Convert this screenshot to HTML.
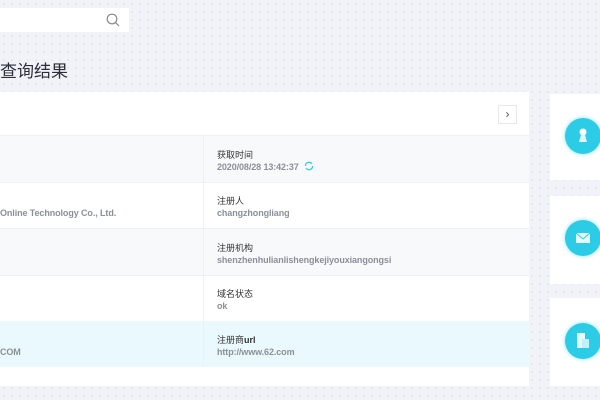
<!DOCTYPE html>
<html><head><meta charset="utf-8"><style>
*{margin:0;padding:0;box-sizing:border-box}
body{width:600px;height:400px;overflow:hidden;background:#f1f3f8;background-image:radial-gradient(#e2e5ee 0.8px,transparent 1px);background-size:8px 8px;font-family:"Liberation Sans","Noto Sans CJK SC",sans-serif;position:relative}
.abs{position:absolute}
.search{left:0;top:8px;width:129px;height:24px;background:#fff}
.title{left:0;top:57px;font-size:17px;color:#2b2f3a}
.card{left:0;top:92px;width:529px;height:294px;background:#fff}
.btn{left:498px;top:105px;width:19px;height:19px;border:1px solid #e6e8ee;background:#fff;font-size:12px;color:#555;text-align:center;line-height:16px}
.row{left:0;width:529px;border-top:1px solid #edf0f4}
.div{left:203px;width:1px;background:#edf0f4}
.lab{left:217px;font-size:9px;color:#333}
.val{font-size:9px;color:#8a8f99;font-weight:bold;letter-spacing:-0.1px}
.side{left:550px;width:50px;background:#fff}
.ic{left:565px;width:36px;height:36px;border-radius:50%;background:#2ccbe6;box-shadow:0 0 4px #7fe3f2}
</style></head><body>
<div class="abs search"><svg class="abs" style="left:106px;top:5px" width="14" height="14" viewBox="0 0 14 14"><circle cx="6" cy="6" r="4.8" fill="none" stroke="#888" stroke-width="1.2"/><path d="M9.5 9.5L13 13" stroke="#888" stroke-width="1.2"/></svg></div>
<div class="abs title">查询结果</div>
<div class="abs card"></div>
<div class="abs btn">›</div>
<div class="abs row" style="top:135px;height:47px;background:#f8f9fb"></div>
<div class="abs row" style="top:182px;height:46px;background:#fff"></div>
<div class="abs row" style="top:228px;height:47px;background:#f8f9fb"></div>
<div class="abs row" style="top:275px;height:46px;background:#fff"></div>
<div class="abs row" style="top:321px;height:46px;background:#e9f9fd;border-top:0"></div>
<div class="abs div" style="top:135px;height:232px"></div>
<div class="abs lab" style="top:148px">获取时间</div>
<div class="abs val" style="left:217px;top:162px">2020/08/28 13:42:37</div>
<svg class="abs" style="left:304px;top:161px" width="10" height="10" viewBox="0 0 10 10"><path d="M1.5 5A3.5 3.5 0 0 1 8 3M8.5 5A3.5 3.5 0 0 1 2 7" fill="none" stroke="#2ccbe6" stroke-width="1.2"/></svg>
<div class="abs lab" style="top:194px">注册人</div>
<div class="abs val" style="left:217px;top:208px">changzhongliang</div>
<div class="abs val" style="left:0;top:208px">Online Technology Co., Ltd.</div>
<div class="abs lab" style="top:241px">注册机构</div>
<div class="abs val" style="left:217px;top:255px">shenzhenhulianlishengkejiyouxiangongsi</div>
<div class="abs lab" style="top:287px">域名状态</div>
<div class="abs val" style="left:217px;top:301px">ok</div>
<div class="abs lab" style="top:333px">注册商<b>url</b></div>
<div class="abs val" style="left:217px;top:347px">http://www.62.com</div>
<div class="abs val" style="left:0;top:347px">COM</div>
<div class="abs side" style="top:94px;height:86px"></div>
<div class="abs side" style="top:196px;height:88px"></div>
<div class="abs side" style="top:298px;height:88px"></div>
<div class="abs ic" style="top:118px"></div>
<div class="abs ic" style="top:220px"></div>
<div class="abs ic" style="top:323px"></div>
<svg class="abs" style="left:576px;top:127px" width="14" height="18" viewBox="0 0 14 18"><circle cx="7" cy="5" r="3.5" fill="#fff"/><path d="M5 8L3 15H11L9 8Z" fill="#e0f8fc"/></svg>
<svg class="abs" style="left:575px;top:232px" width="16" height="12" viewBox="0 0 16 12"><rect x="1" y="1" width="14" height="10" fill="#e6fafd"/><path d="M1 1L8 7L15 1" fill="none" stroke="#2ccbe6" stroke-width="1"/></svg>
<svg class="abs" style="left:575px;top:332px" width="16" height="18" viewBox="0 0 16 18"><rect x="2" y="1" width="8" height="15" fill="#e6fafd"/><rect x="7" y="7" width="7" height="9" fill="#bff1fa"/></svg>
</body></html>
